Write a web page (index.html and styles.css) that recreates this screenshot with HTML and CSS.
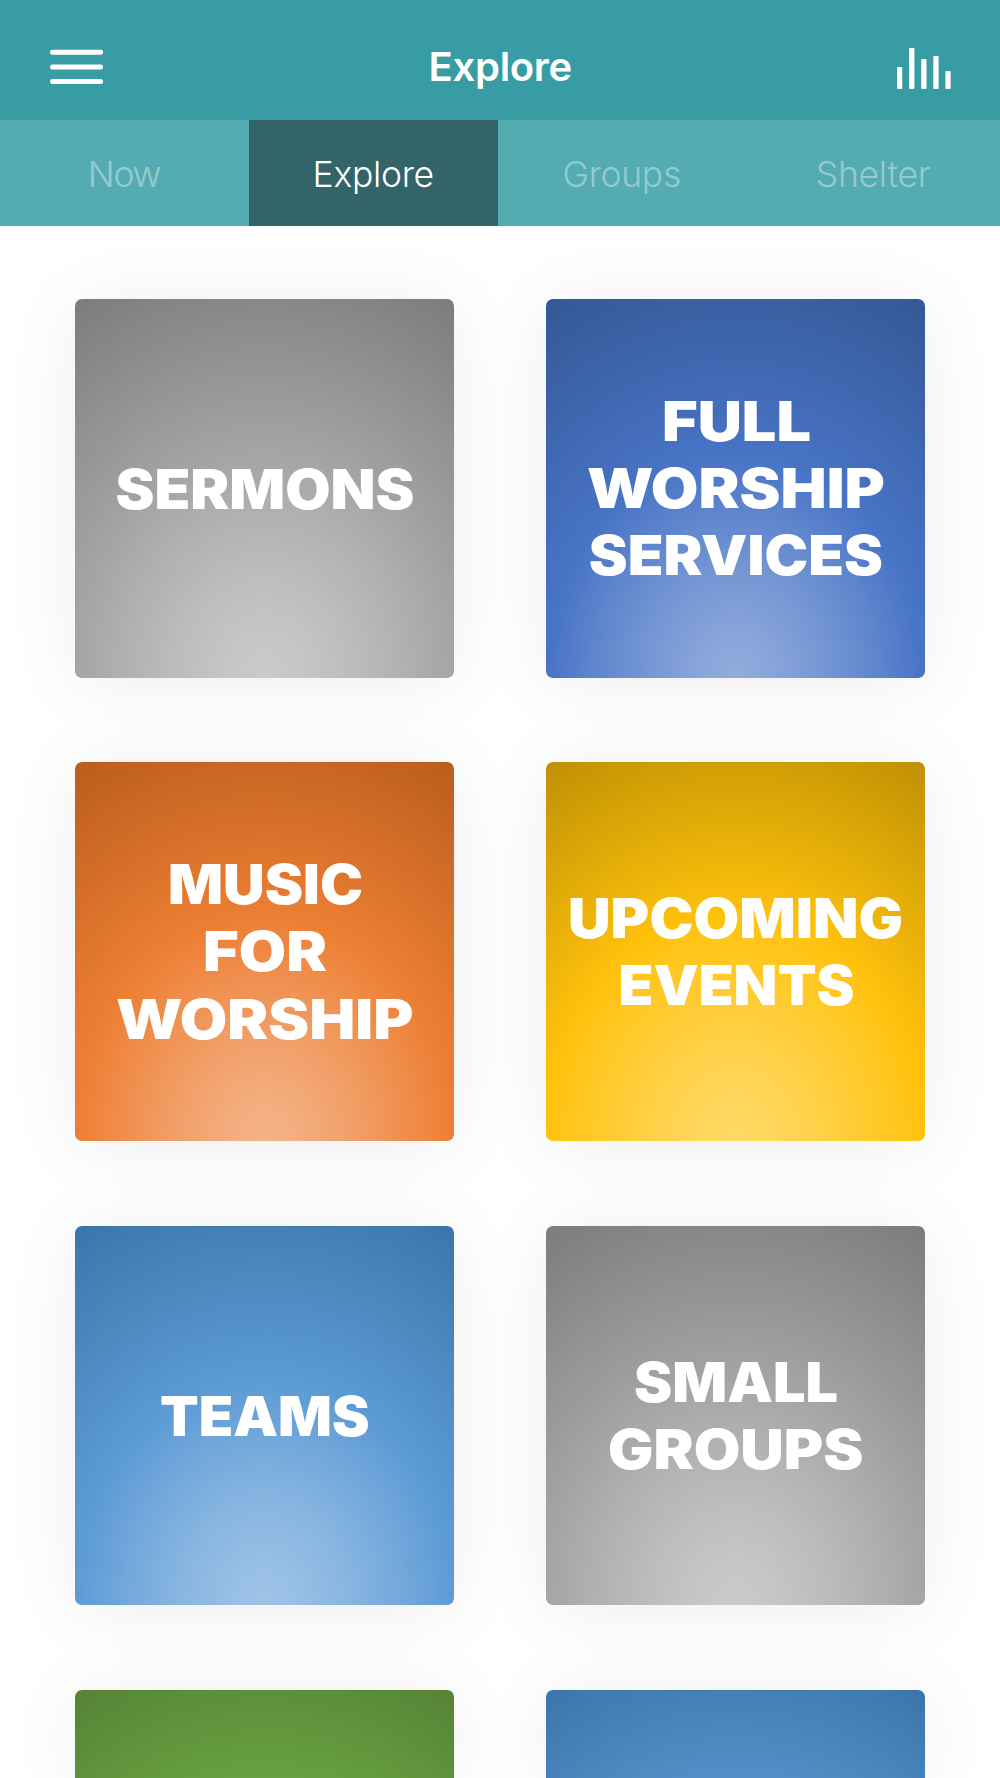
FILE: index.html
```html
<!DOCTYPE html>
<html lang="en">
<head>
<meta charset="utf-8">
<title>Explore</title>
<link rel="stylesheet" href="styles.css">
</head>
<body>
<header class="header">
  <svg class="icon" width="54" height="42" viewBox="0 0 54 42"><path class="menu-line" d="M2.5 5.3H50.6M2.5 19.9H50.6M2.5 34.4H50.6"/></svg>
  <h1 class="title">Explore</h1>
  <svg class="icon" width="54" height="42" viewBox="0 0 54 42"><g class="bars"><rect x="0" y="20" width="5.3" height="22" rx="1"/><rect x="12.1" y="1" width="5.3" height="41" rx="1"/><rect x="24.2" y="12" width="5.3" height="30" rx="1"/><rect x="36.3" y="9" width="5.3" height="33" rx="1"/><rect x="48.4" y="24" width="5.3" height="18" rx="1"/></g></svg>
</header>
<nav class="tabs">
  <a class="tab tab-now">Now</a>
  <a class="tab active">Explore</a>
  <a class="tab">Groups</a>
  <a class="tab">Shelter</a>
</nav>
<main class="grid">
  <a class="tile gray"><svg class="label" viewBox="0 0 379 379"><text x="40.5" y="209.5" textLength="299" lengthAdjust="spacingAndGlyphs">SERMONS</text></svg></a>
  <a class="tile navy"><svg class="label" viewBox="0 0 379 379"><text x="116" y="141.6" textLength="149" lengthAdjust="spacingAndGlyphs">FULL</text><text x="41" y="209.1" textLength="298" lengthAdjust="spacingAndGlyphs">WORSHIP</text><text x="42.8" y="276.3" textLength="294" lengthAdjust="spacingAndGlyphs">SERVICES</text></svg></a>
  <a class="tile orange"><svg class="label" viewBox="0 0 379 379"><text x="93" y="141.5" textLength="195" lengthAdjust="spacingAndGlyphs">MUSIC</text><text x="128" y="209" textLength="124" lengthAdjust="spacingAndGlyphs">FOR</text><text x="41" y="276.6" textLength="297.5" lengthAdjust="spacingAndGlyphs">WORSHIP</text></svg></a>
  <a class="tile yellow"><svg class="label" viewBox="0 0 379 379"><text x="22" y="175.6" textLength="335" lengthAdjust="spacingAndGlyphs">UPCOMING</text><text x="72.5" y="243" textLength="236" lengthAdjust="spacingAndGlyphs">EVENTS</text></svg></a>
  <a class="tile sky"><svg class="label" viewBox="0 0 379 379"><text x="85" y="209.8" textLength="209.5" lengthAdjust="spacingAndGlyphs">TEAMS</text></svg></a>
  <a class="tile gray"><svg class="label" viewBox="0 0 379 379"><text x="88" y="175.8" textLength="204" lengthAdjust="spacingAndGlyphs">SMALL</text><text x="62" y="243" textLength="255.5" lengthAdjust="spacingAndGlyphs">GROUPS</text></svg></a>
  <a class="tile green"></a>
  <a class="tile sky"></a>
</main>
</body>
</html>
```
FILE: styles.css
```css
* { box-sizing: border-box; }
body {
  margin: 0;
  width: 1000px;
  height: 1778px;
  overflow: hidden;
  background: #fff;
  font-family: Inter, "Liberation Sans", sans-serif;
}
.header {
  height: 120px;
  padding: 47px 49px 0 49.5px;
  display: flex;
  justify-content: space-between;
  align-items: flex-start;
  background: #379ca4;
}
.icon { display: block; }
.menu-line { stroke: #fff; stroke-width: 5; stroke-linecap: round; }
.bars { fill: #fff; }
.title {
  margin: 0;
  color: #fff;
  font-size: 40px;
  font-weight: 600;
  line-height: 40px;
  letter-spacing: -0.3px;
}
.tabs {
  height: 106px;
  display: grid;
  grid-template-columns: 249px 248.5px 248.5px 254px;
  background: #54abb2;
}
.tab {
  display: flex;
  align-items: center;
  justify-content: center;
  padding-top: 2px;
  color: #95cbcf;
  font-size: 35.5px;
  font-weight: 300;
  letter-spacing: -0.3px;
}
.tab-now { padding-right: 1px; letter-spacing: -1.2px; }
.active { background: #326468; color: #fff; }
.grid {
  height: 1552px;
  overflow: hidden;
  display: grid;
  grid-template-columns: 379px 379px;
  grid-template-rows: repeat(3, 379px) 88.5px;
  column-gap: 92px;
  row-gap: 84.7px;
  padding: 72.6px 75px 0;
}
.tile {
  border-radius: 7px;
  background: radial-gradient(375px 445px at 50% 379px, var(--light), color-mix(in srgb, var(--light) 88%, var(--mid)) 10%, color-mix(in srgb, var(--light) 64%, var(--mid)) 23%, color-mix(in srgb, var(--light) 30%, var(--mid)) 38%, var(--mid) 50%, var(--dark));
  box-shadow: 0 5px 75px rgba(0, 0, 0, 0.075);
}
.tile:nth-child(n+7) { border-radius: 7px 7px 0 0; }
.label { display: block; width: 379px; height: 379px; }
.label text {
  fill: #fff;
  font-size: 54.5px;
  font-weight: 900;
}
.gray { --light: #cacaca; --mid: #a5a5a5; --dark: #7b7b7b; }
.navy { --light: #91abdc; --mid: #4874c6; --dark: #345694; }
.orange { --light: #f4b287; --mid: #ed7f33; --dark: #b95c1c; }
.yellow { --light: #ffd966; --mid: #ffc20c; --dark: #bd8f04; }
.sky { --light: #9fc3e7; --mid: #5d9bd5; --dark: #3975aa; }
.green { --light: #a9d08e; --mid: #70ad47; --dark: #548235; }
```
